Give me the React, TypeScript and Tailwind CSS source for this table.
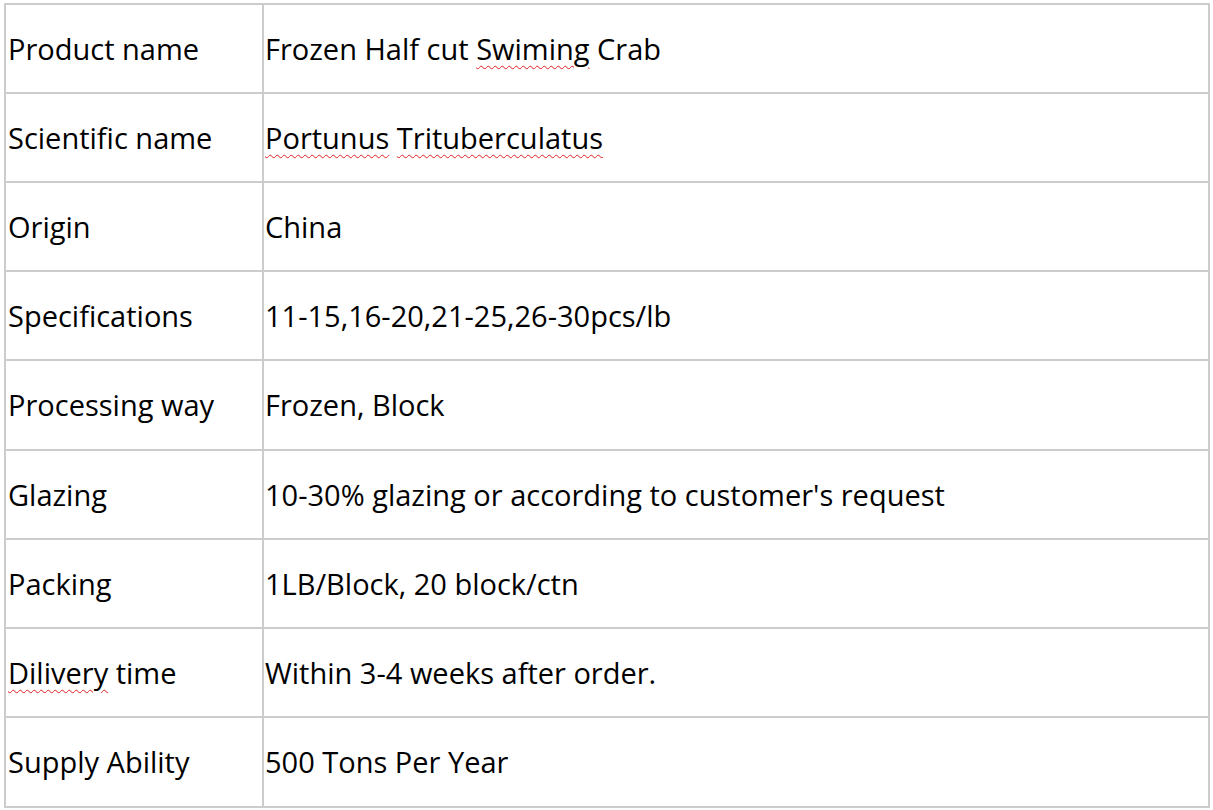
const rows: { label: React.ReactNode; value: React.ReactNode; h: string }[] = [
  { label: "Product name", value: <>Frozen Half cut <Sq>Swiming</Sq> Crab</>, h: "h-[89px]" },
  { label: "Scientific name", value: <><Sq>Portunus</Sq> <Sq>Trituberculatus</Sq></>, h: "h-[89px]" },
  { label: "Origin", value: "China", h: "h-[89px]" },
  { label: "Specifications", value: "11-15,16-20,21-25,26-30pcs/lb", h: "h-[89px]" },
  { label: "Processing way", value: "Frozen, Block", h: "h-[90px]" },
  { label: "Glazing", value: "10-30% glazing or according to customer's request", h: "h-[89px]" },
  { label: "Packing", value: "1LB/Block, 20 block/ctn", h: "h-[89px]" },
  { label: <><Sq>Dilivery</Sq> time</>, value: "Within 3-4 weeks after order.", h: "h-[89px]" },
  { label: "Supply Ability", value: "500 Tons Per Year", h: "h-[90px]" },
];

function Sq({ children }: { children: React.ReactNode }) {
  return (
    <span className="underline decoration-wavy decoration-[#e02020] decoration-1 underline-offset-[5px]">
      {children}
    </span>
  );
}

export default function App() {
  return (
    <div className="min-h-[810px] w-[1213px] bg-white pl-[4px] pt-[3px]">
      <div
        className="w-[1206px] border-l-2 border-t-2 border-[#cccccc] text-[29px] text-black"
        style={{ fontFamily: '"Open Sans", "Noto Sans", sans-serif' }}
      >
        {rows.map((r, i) => (
          <div key={i} className={`flex ${r.h}`}>
            <div className="flex w-[258px] items-center border-r-2 border-b-2 border-[#cccccc] pl-[2px]">
              <span>{r.label}</span>
            </div>
            <div className="flex flex-1 items-center border-r-2 border-b-2 border-[#cccccc] pl-[1px]">
              <span>{r.value}</span>
            </div>
          </div>
        ))}
      </div>
    </div>
  );
}
